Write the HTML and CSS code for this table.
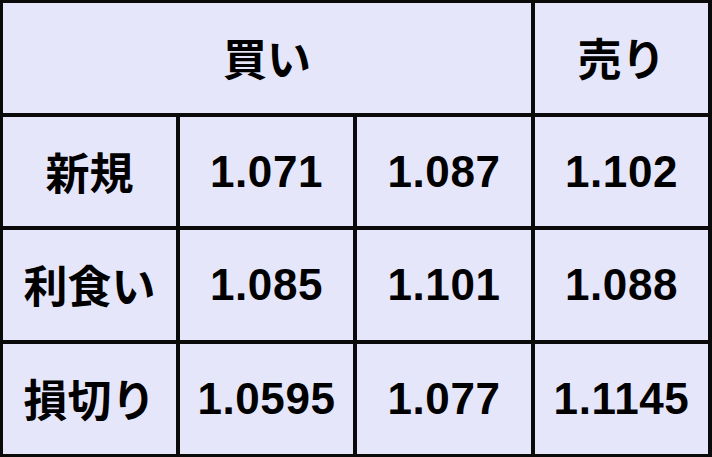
FILE: index.html
```html
<!DOCTYPE html>
<html lang="ja">
<head>
<meta charset="utf-8">
<title>買い・売り</title>
<link rel="stylesheet" href="styles.css">
</head>
<body>
<div class="grid">
  <div class="cell head span3">買い</div>
  <div class="cell head">売り</div>

  <div class="cell label">新規</div>
  <div class="cell num">1.071</div>
  <div class="cell num">1.087</div>
  <div class="cell num">1.102</div>

  <div class="cell label">利食い</div>
  <div class="cell num">1.085</div>
  <div class="cell num">1.101</div>
  <div class="cell num">1.088</div>

  <div class="cell label">損切り</div>
  <div class="cell num">1.0595</div>
  <div class="cell num">1.077</div>
  <div class="cell num">1.1145</div>
</div>
</body>
</html>
```

FILE: styles.css
```css
html, body {
  margin: 0;
  padding: 0;
  background: #ffffff;
}

.grid {
  box-sizing: border-box;
  width: 712px;
  height: 457px;
  display: grid;
  grid-template-columns: 173px 173px 174px 173px;
  grid-template-rows: 110px 109px 110px 110px;
  gap: 4px;
  padding: 3px 4px 3px 3px;
  background: #0a0a0a;
}

.cell {
  background: #e6e6fa;
  color: #000;
  display: flex;
  align-items: center;
  justify-content: center;
  font-weight: bold;
  white-space: nowrap;
}

.span3 {
  grid-column: span 3;
}

.head,
.label {
  font-family: "Noto Sans CJK JP", "Liberation Sans", sans-serif;
  font-size: 44px;
  padding-bottom: 2px;
}

.num {
  font-family: "Liberation Sans", Arial, sans-serif;
  font-size: 44px;
  letter-spacing: 0.6px;
}
```
